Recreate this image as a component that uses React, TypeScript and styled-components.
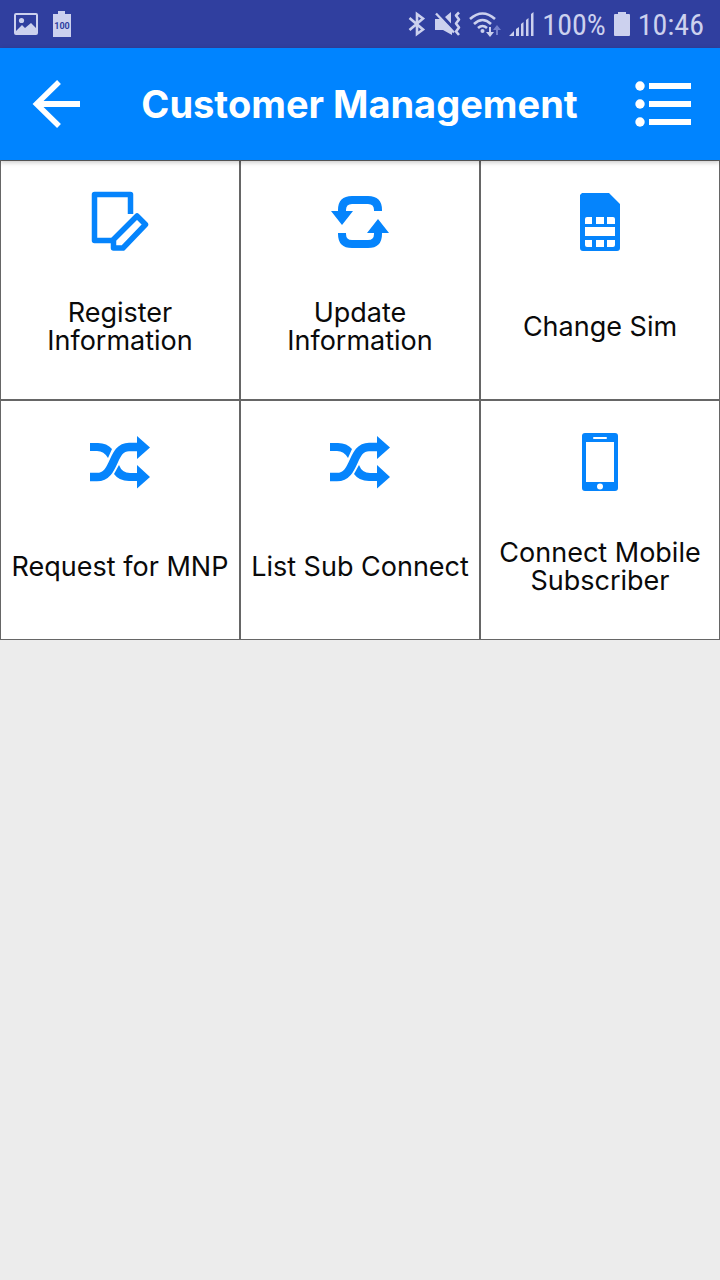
import React from "react";
import styled, { createGlobalStyle } from "styled-components";

const GlobalStyle = createGlobalStyle`
  *, *::before, *::after { box-sizing: border-box; }
  body {
    margin: 0;
    background: #ececec;
    font-family: Inter, "Liberation Sans", sans-serif;
  }
`;

const Screen = styled.div`
  min-height: 100vh;
  background: #ececec;
`;

const StatusBar = styled.div`
  display: flex;
  align-items: center;
  justify-content: space-between;
  height: 48px;
  padding: 0 16px 0 14px;
  background: #303f9f;
  color: #ccd1ee;
`;

const StatusGroup = styled.div<{ $gap: number }>`
  display: flex;
  align-items: center;
  gap: ${(p) => p.$gap}px;
`;

const StatusText = styled.span`
  padding-top: 2px;
  font-family: "Roboto Condensed", Roboto, sans-serif;
  font-size: 30px;
  line-height: 46px;
  white-space: nowrap;
`;

const Glyph = styled.svg`
  display: block;
  flex: none;
`;

const AppBar = styled.header`
  position: relative;
  z-index: 1;
  display: flex;
  align-items: center;
  justify-content: space-between;
  height: 112px;
  padding: 0 28px;
  background: #0084ff;
  color: #fff;
  box-shadow: 0 2px 5px rgba(0, 0, 0, 0.25);
`;

const Title = styled.h1`
  margin: 0;
  font-size: 38px;
  line-height: 48px;
  font-weight: 700;
  text-align: center;
  white-space: nowrap;
`;

const BarButton = styled.button`
  flex: none;
  padding: 0;
  border: 0;
  background: none;
  color: inherit;
  cursor: pointer;
`;

const Grid = styled.main`
  display: grid;
  grid-template-columns: repeat(3, minmax(0, 1fr));
`;

const Tile = styled.button`
  display: flex;
  flex-direction: column;
  align-items: center;
  aspect-ratio: 1;
  padding: 29px 0 16px;
  border: 1px solid #666;
  background: #fff;
  color: #0a0a0a;
  font-family: inherit;
  cursor: pointer;
`;

const TileIcon = styled.svg`
  display: block;
  flex: none;
  color: #0584fc;
`;

const TileLabel = styled.span`
  flex: 1;
  display: flex;
  align-items: center;
  padding-top: 16px;
  font-size: 27px;
  line-height: 28px;
  text-align: center;
  white-space: pre-line;
`;

/* Tile drawings share one 64 x 64 canvas. */
const icons = {
  register: (
    <g fill="none" stroke="currentColor" strokeWidth="5.500" strokeLinejoin="round">
      <path d="M42.500 24V4.500H6.500V50.500H26" />
      <path d="M49 26L57.500 34.500L35 58H25.500V49.500Z" />
    </g>
  ),
  update: (
    <g>
      <g fill="none" stroke="currentColor" strokeWidth="8">
        <path d="M14 24V20Q14 10 24 10H40Q50 10 50 20V21" />
        <path d="M14 43V44Q14 54 24 54H40Q50 54 50 44V40" />
      </g>
      <path fill="currentColor" d="M3 21H25L14 35ZM39 43H61L50 29Z" />
    </g>
  ),
  sim: (
    <path
      fill="currentColor"
      fillRule="evenodd"
      d="M14 3H41L52 14V58Q52 61 49 61H15Q12 61 12 58V5ZM19 27Q17 27 17 29V34H24V27ZM28 27V34H36V27ZM39 27V34H47V29Q47 27 45 27ZM17 37V46H47V37ZM17 50V55Q17 57 19 57H24V50ZM28 50V57H36V50ZM39 50V57H45Q47 57 47 55V50Z"
    />
  ),
  shuffle: (
    <g>
      <path fill="none" stroke="currentColor" strokeWidth="8.500" d="M2 47H9C28 47 23 17 41 17H51" />
      <path fill="currentColor" d="M2 13H10Q19 13 24 19L20 28Q16 21 9 21H2ZM49 6L62 17.500L49 29ZM49 35L62 47L49 58.500V51H41Q31 51 26 44L31 35Q34 43 42 43H49Z" />
    </g>
  ),
  phone: (
    <g>
      <path
        fill="currentColor"
        fillRule="evenodd"
        d="M17 3H47Q50 3 50 6V58Q50 61 47 61H17Q14 61 14 58V6Q14 3 17 3ZM18 12V52H46V12ZM26 7Q25 7 25 8T26 9H38Q39 9 39 8T38 7Z"
      />
      <circle cx="32" cy="56.500" r="3" fill="#fff" />
    </g>
  ),
};

const tiles: { label: string; icon: keyof typeof icons }[] = [
  { label: "Register\nInformation", icon: "register" },
  { label: "Update\nInformation", icon: "update" },
  { label: "Change Sim", icon: "sim" },
  { label: "Request for MNP", icon: "shuffle" },
  { label: "List Sub Connect", icon: "shuffle" },
  { label: "Connect Mobile\nSubscriber", icon: "phone" },
];

const PictureGlyph = () => (
  <Glyph width="24" height="24" viewBox="0 0 24 24" fill="currentColor">
    <path
      fillRule="evenodd"
      d="M2 1H22Q24 1 24 3V21Q24 23 22 23H2Q0 23 0 21V3Q0 1 2 1ZM2 3V19L8 13L11 16L17 11L22 16V3Z"
    />
    <circle cx="7.500" cy="8.500" r="2.600" />
  </Glyph>
);

const BatteryLevelGlyph = () => (
  <Glyph width="18" height="26" viewBox="0 0 18 26">
    <path fill="currentColor" d="M5 0H12V3H18V26H0V3H5Z" />
    <text x="9" y="18" textAnchor="middle" fontFamily="Roboto, sans-serif" fontWeight="700" fontSize="9" fill="#303f9f">
      100
    </text>
  </Glyph>
);

const BluetoothGlyph = () => (
  <Glyph width="18" height="26" viewBox="0 0 18 26" fill="none" stroke="currentColor" strokeWidth="2.600">
    <path d="M1.500 7L15 18.500L9 23V3L15 7.500L1.500 19" />
  </Glyph>
);

const MutedGlyph = () => (
  <Glyph width="27" height="26" viewBox="0 0 27 26">
    <path fill="currentColor" d="M1 8H8L18 18.500V24L9 19H1ZM11 6L17 1V12.500Z" />
    <path fill="none" stroke="currentColor" strokeWidth="2.400" d="M2 2.500L20 21.500" />
    <path
      fill="none"
      stroke="currentColor"
      strokeWidth="2.600"
      d="M25 1.500L22 4.500L25 8.500L22 12.500L25 16.500L22 20.500L25 24"
      strokeLinejoin="round"
    />
  </Glyph>
);

const WifiGlyph = () => (
  <Glyph width="32" height="26" viewBox="0 0 32 26">
    <g fill="none" stroke="currentColor" strokeWidth="2.600">
      <path d="M1 8Q13.500 -3 26 8" />
      <path d="M5 13Q13.500 5 22 13" />
      <path d="M9 17Q13.500 13 18 17" />
    </g>
    <circle cx="13.500" cy="20" r="2" fill="currentColor" />
    <path fill="currentColor" d="M20 16H22V21H25L21 26L17 21H20Z" />
    <path fill="#7480cc" d="M27 24H29V19H32L28 14L24 19H27Z" />
  </Glyph>
);

const SignalGlyph = () => (
  <Glyph width="25" height="26" viewBox="0 0 25 26" fill="currentColor">
    <path d="M0 25L5 20V25ZM7 18L10 16V25H7ZM12 13L14.500 11V25H12ZM17 9L19.500 7V25H17ZM22 3L24.500 1V25H22Z" />
  </Glyph>
);

const BatteryGlyph = () => (
  <Glyph width="16" height="24" viewBox="0 0 16 24" fill="currentColor">
    <path d="M4 0H12V2H15Q16 2 16 3V23Q16 24 15 24H1Q0 24 0 23V3Q0 2 1 2H4Z" />
  </Glyph>
);

export default function App() {
  return (
    <Screen>
      <GlobalStyle />
      <StatusBar>
        <StatusGroup $gap={15}>
          <PictureGlyph />
          <BatteryLevelGlyph />
        </StatusGroup>
        <StatusGroup $gap={8}>
          <BluetoothGlyph />
          <MutedGlyph />
          <WifiGlyph />
          <SignalGlyph />
          <StatusText>100%</StatusText>
          <BatteryGlyph />
          <StatusText>10:46</StatusText>
        </StatusGroup>
      </StatusBar>
      <AppBar>
        <BarButton type="button" aria-label="Back">
          <Glyph width="56" height="56" viewBox="0 0 56 56" fill="none" stroke="currentColor" strokeWidth="6">
            <path d="M52 28H9" />
            <path strokeWidth="5.500" d="M31 6L8.500 28L31 50" />
          </Glyph>
        </BarButton>
        <Title>Customer Management</Title>
        <BarButton type="button" aria-label="Menu">
          <Glyph width="57" height="56" viewBox="0 0 57 56" fill="currentColor">
            <circle cx="5" cy="10" r="4.700" />
            <circle cx="5" cy="28" r="4.700" />
            <circle cx="5" cy="46" r="4.700" />
            <path d="M14 7H56V13H14ZM14 25H56V31H14ZM14 43H56V49H14Z" />
          </Glyph>
        </BarButton>
      </AppBar>
      <Grid>
        {tiles.map((tile) => (
          <Tile type="button" key={tile.label}>
            <TileIcon width="64" height="64" viewBox="0 0 64 64" aria-hidden="true">
              {icons[tile.icon]}
            </TileIcon>
            <TileLabel>{tile.label}</TileLabel>
          </Tile>
        ))}
      </Grid>
    </Screen>
  );
}
